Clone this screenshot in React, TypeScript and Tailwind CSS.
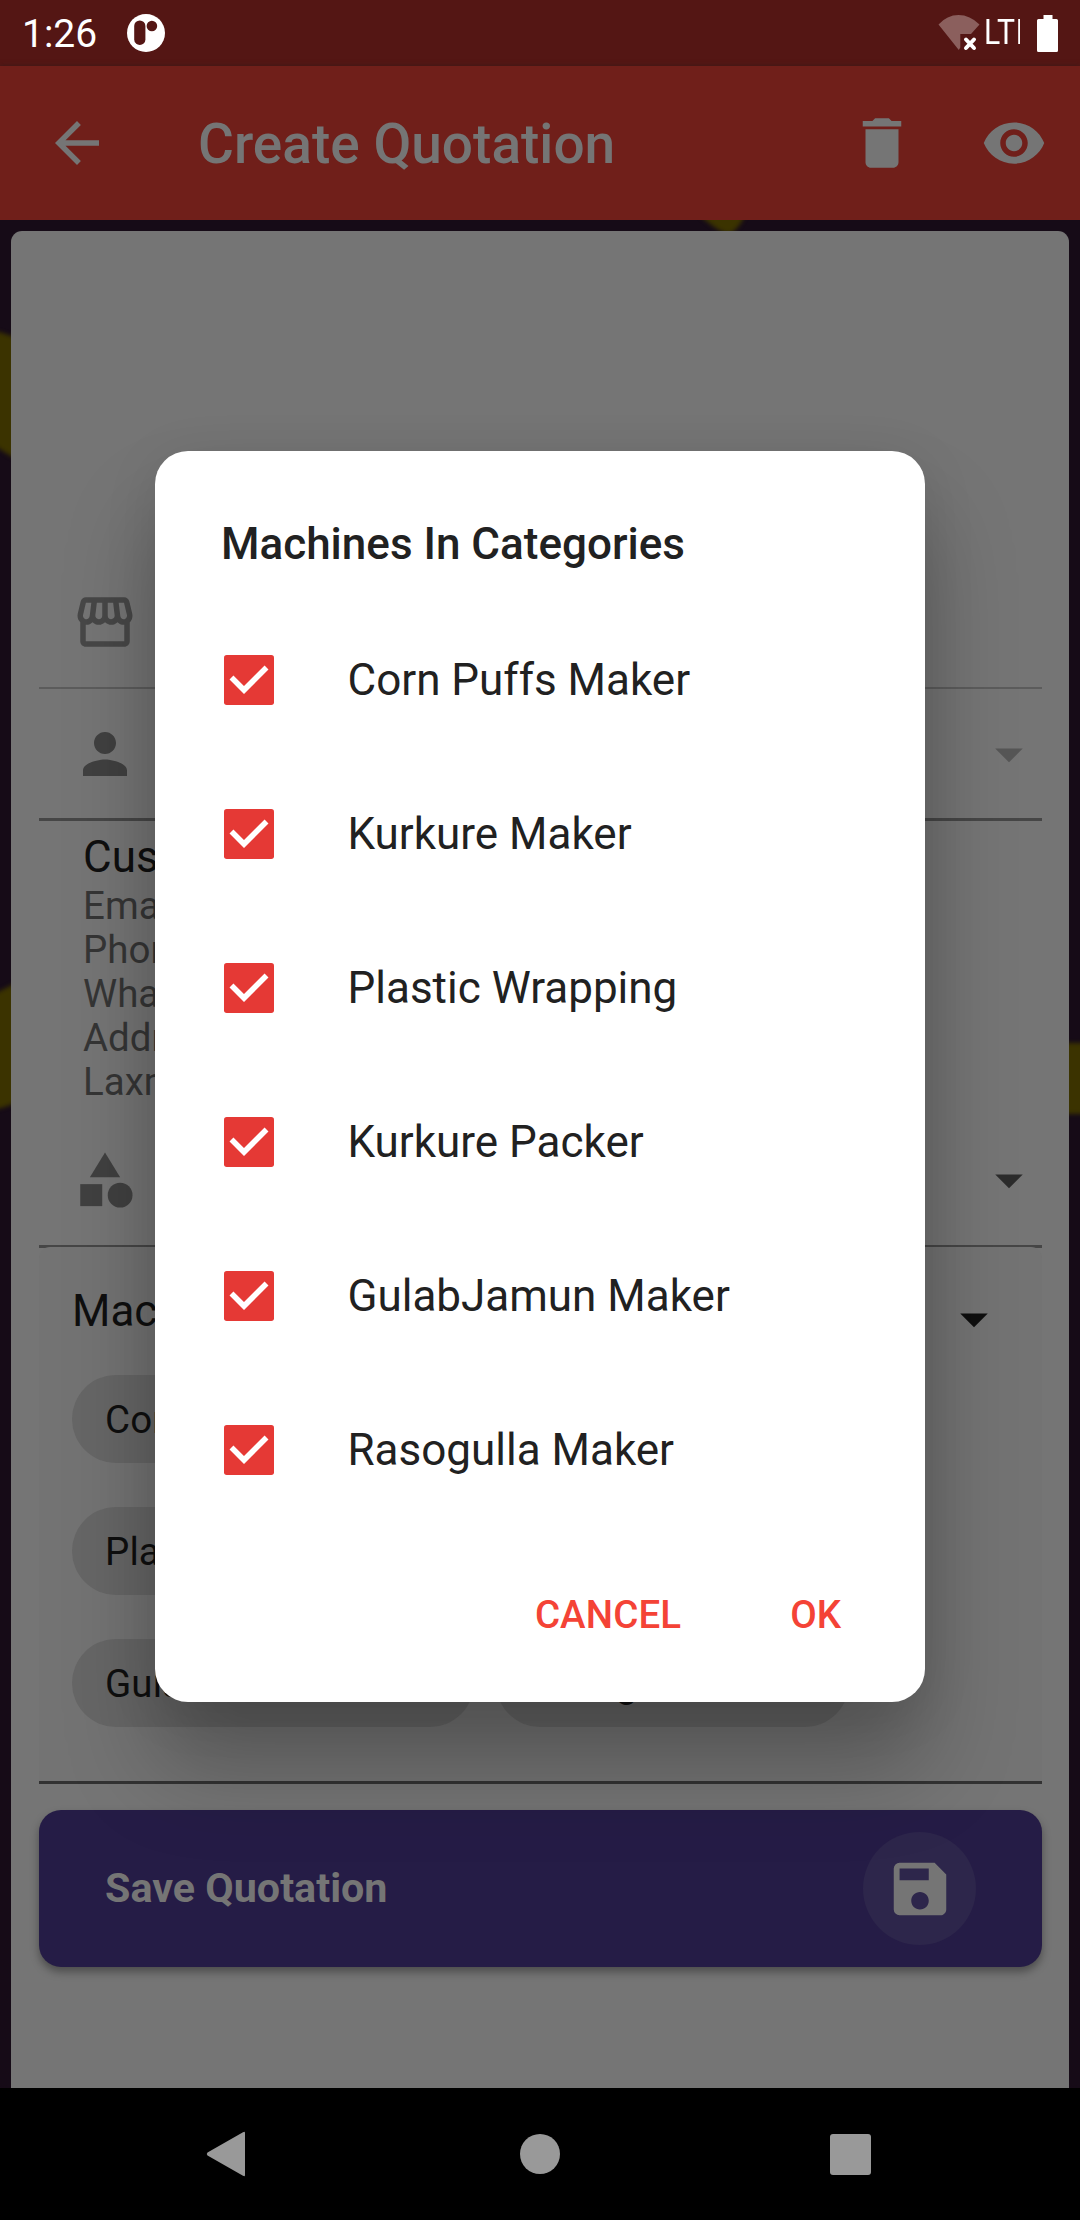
import type { ReactNode } from "react";
import {
  MdArrowBack,
  MdArrowDropDown,
  MdCategory,
  MdDelete,
  MdOutlineStorefront,
  MdPerson,
  MdSave,
  MdVisibility,
} from "react-icons/md";

const machines = [
  "Corn Puffs Maker",
  "Kurkure Maker",
  "Plastic Wrapping",
  "Kurkure Packer",
  "GulabJamun Maker",
  "Rasogulla Maker",
];

const customerLines = ["Email:", "Phone:", "WhatsApp:", "Address:", "Laxmi Nagar"];

function StatusBar() {
  return (
    <div className="flex h-[66px] shrink-0 items-center bg-[#541614] pr-[22px] pl-[22px] text-white">
      <span className="w-[105px] pt-[3px] text-[39px] leading-[63px]">1:26</span>
      <svg className="h-[38px] w-[38px]" viewBox="0 0 38 38">
        <circle cx="19" cy="19" r="19" fill="white" />
        <rect x="7.2" y="6.4" width="11.2" height="24.6" rx="5.6" fill="#541614" />
        <circle cx="24.9" cy="12" r="5.3" fill="#541614" />
      </svg>
      <div className="ml-auto flex items-center">
        <svg className="h-[36px] w-[42px]" viewBox="0 0 42 36">
          <path d="M0.500 9.500Q9 0 20.500 0T41.500 9.500L33 19H22.300V32.500L20.800 35Z" fill="#8b5f5d" />
          <path d="M28 24.500L36 33M36 24.500L28 33" stroke="white" strokeWidth="4" strokeLinecap="round" />
        </svg>
        <div className="ml-[4px] w-[36px] overflow-hidden">
          <span className="block origin-left scale-x-[0.86] text-[35px] leading-[66px] tracking-[1px] whitespace-nowrap">
            LTE
          </span>
        </div>
        <svg className="ml-[17px] h-[37px] w-[21px]" viewBox="0 0 21 37">
          <path d="M6.500 0H15.500V4H19.500Q21 4 21 5.500V35.500Q21 37 19.500 37H1.500Q0 37 0 35.500V5.500Q0 4 1.500 4H6.500Z" fill="white" />
        </svg>
      </div>
    </div>
  );
}

function AppBar() {
  return (
    <div className="relative flex h-[154px] shrink-0 items-center bg-[#701f1a] pr-[33px] pl-[44px] text-[#757575] shadow-[0_2px_6px_#1e1e1e]">
      <MdArrowBack size={66} />
      <h1 className="ml-[88px] pt-[3px] text-[55px] leading-[151px] font-medium">Create Quotation</h1>
      <MdDelete size={66} className="ml-auto" />
      <MdVisibility size={66} className="ml-[66px]" />
    </div>
  );
}

function Field({ icon, arrow, className }: { icon: ReactNode; arrow?: string; className: string }) {
  return (
    <div className={`flex items-center justify-between pl-[33px] ${className}`}>
      {icon}
      {arrow && <MdArrowDropDown size={66} className={arrow} />}
    </div>
  );
}

/* Blurred shapes of the wallpaper that show around the card. */
function Wallpaper() {
  return (
    <svg className="absolute inset-0 h-full w-full" viewBox="0 0 1080 1868">
      <g fill="#3b3300" className="blur-[2px]">
        <path d="M-10 110Q5 112 30 124V246Q8 236 -10 222Z" />
        <path d="M-10 776L20 761V880Q8 888 -10 890Z" />
        <path d="M1060 823H1090V894H1060Z" />
        <path d="M696 -8Q720 14 730 14Q742 6 746 -8Z" />
      </g>
    </svg>
  );
}

function QuotationCard() {
  return (
    <div className="relative mx-[11px] mt-[11px] flex h-[1900px] flex-col rounded-[11px] bg-[#757575] pr-[27px] pl-[28px]">
      <Field
        className="mt-[325px] h-[133px] border-b-2 border-[#5c5c5c]"
        icon={<MdOutlineStorefront size={66} className="text-[#474747]" />}
      />
      <Field
        className="h-[132px] border-b-3 border-[#464646]"
        icon={<MdPerson size={66} className="text-[#404040]" />}
        arrow="text-[#565656]"
      />
      <div className="h-[283px] pt-[12px] pl-[44px]">
        <p className="text-[44px] leading-[49px] text-[#0f0f0f]">Customer</p>
        <div className="mt-[2px] text-[38.5px] leading-[44px] text-[#353535]">
          {customerLines.map((line) => (
            <p key={line}>{line}</p>
          ))}
        </div>
      </div>
      <Field
        className="h-[144px] border-b-3 border-[#464646] pt-[11px]"
        icon={<MdCategory size={66} className="text-[#404040]" />}
        arrow="text-[#2c2c2c]"
      />
      <div className="-mt-px h-[537px] rounded-t-[11px] border-b-3 border-[#323232] bg-[#737373] text-[#0f0f0f]">
        <div className="flex h-[128px] items-center justify-between pr-[35px] pl-[33px]">
          <span className="text-[44px] leading-[128px]">Machines</span>
          <MdArrowDropDown size={66} className="mt-[16px]" />
        </div>
        <div className="grid grid-cols-[max-content_max-content] gap-x-[22px] gap-y-[44px] pl-[33px] text-[38.5px]">
          {machines.map((name) => (
            <span
              key={name}
              className="h-[88px] justify-self-start rounded-full bg-[#666666] px-[33px] pt-px leading-[88px] tracking-[0.1px]"
            >
              {name}
            </span>
          ))}
        </div>
      </div>
      <div className="mt-[26px] flex h-[157px] shrink-0 items-center justify-between rounded-[22px] bg-[#251c46] pr-[66px] pl-[66px] text-[#757575] shadow-[0_5px_8px_rgba(0,0,0,0.35)]">
        <span className="pb-[2px] text-[41.25px] leading-[48px] font-bold">Save Quotation</span>
        <div className="flex h-[113px] w-[113px] items-center justify-center rounded-full bg-[#2d264b]">
          <MdSave size={70} />
        </div>
      </div>
    </div>
  );
}

function MachinesDialog() {
  return (
    <div className="absolute top-[451px] left-[155px] flex h-[1251px] w-[770px] flex-col rounded-[33px] bg-white text-[#212121] shadow-[0_66px_90px_rgba(0,0,0,0.25),0_10px_55px_rgba(0,0,0,0.09)]">
      <h2 className="mt-[34px] pl-[66px] text-[44px] leading-[118px] font-medium">Machines In Categories</h2>
      {machines.map((name) => (
        <div key={name} className="flex h-[154px] items-center pl-[69px]">
          <svg className="h-[50px] w-[50px]" viewBox="0 0 49.500 49.500">
            <rect width="49.500" height="49.500" rx="2.750" fill="#e53935" />
            <path d="M7.400 22.300L19.800 34.700L42.100 12.400" fill="none" stroke="white" strokeWidth="5.500" />
          </svg>
          <span className="ml-[73.5px] text-[44px] leading-[154px]">{name}</span>
        </div>
      ))}
      <div className="flex flex-1 items-center justify-end pr-[84px] text-[38.5px] font-medium text-[#f44336]">
        <span className="tracking-[0.1px]">CANCEL</span>
        <span className="ml-[109px]">OK</span>
      </div>
    </div>
  );
}

function NavBar() {
  return (
    <div className="relative flex h-[132px] shrink-0 items-center bg-black">
      <svg className="ml-[206px] h-[46px] w-[39px]" viewBox="0 0 39 46">
        <path d="M37 1.200Q39 0 39 2V44Q39 46 37 44.800L1.500 24.500Q0 23 1.500 21.500Z" fill="#999999" />
      </svg>
      <div className="ml-[275px] h-[40px] w-[40px] rounded-full bg-[#999999]" />
      <div className="ml-[270px] h-[41px] w-[41px] rounded-[3px] bg-[#999999]" />
    </div>
  );
}

export default function App() {
  return (
    <div className="relative flex h-[2220px] w-[1080px] flex-col overflow-hidden font-['Roboto',sans-serif]">
      <StatusBar />
      <div className="flex min-h-0 flex-1 flex-col">
        <AppBar />
        <div className="relative min-h-0 flex-1 overflow-hidden bg-[#160b17]">
          <Wallpaper />
          <QuotationCard />
        </div>
      </div>
      <MachinesDialog />
      <NavBar />
    </div>
  );
}
